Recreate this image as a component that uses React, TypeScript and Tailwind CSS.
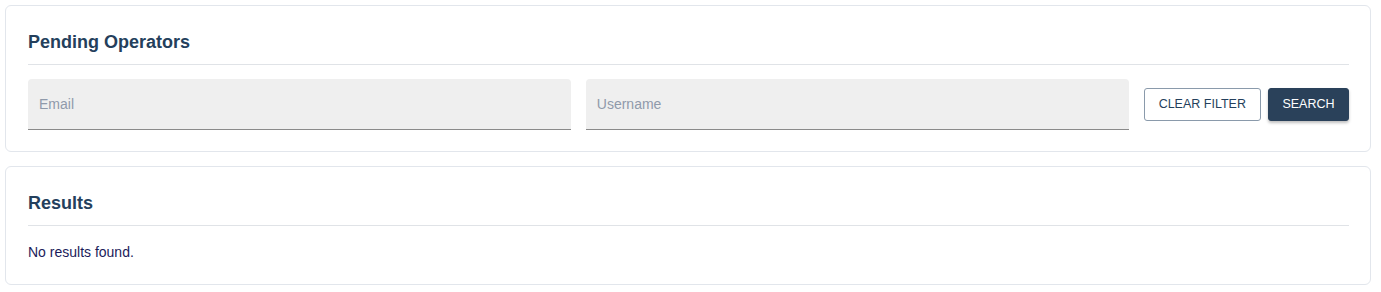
import React, { useState } from "react";

const font = { fontFamily: '"Liberation Sans", Arial, sans-serif' };

function Card({ title, children }: { title: string; children: React.ReactNode }) {
  return (
    <div className="bg-white border border-[#e2e6ec] rounded-[6px] pl-[22px] pr-[21px] pt-[22px] pb-[21px]">
      <h2 className="text-[18px] leading-[28px] font-bold text-[#243f5c] pb-[8px] border-b border-[#e0e3e7]">
        {title}
      </h2>
      {children}
    </div>
  );
}

export default function App() {
  const [email, setEmail] = useState("");
  const [username, setUsername] = useState("");

  return (
    <div style={font} className="bg-white min-h-[292px] pl-[5px] pr-[10px] pt-[5px] flex flex-col gap-[14px]">
      <Card title="Pending Operators">
        <div className="mt-[14px] flex items-center gap-[15px]">
          <input
            className="flex-1 min-w-0 h-[51px] bg-[#efefef] rounded-t-[4px] border-b border-[#8a8a8a] px-[11px] text-[14px] text-[#333] placeholder:text-[#8f9aab] outline-none"
            placeholder="Email"
            value={email}
            onChange={(e) => setEmail(e.target.value)}
          />
          <input
            className="flex-1 min-w-0 h-[51px] bg-[#efefef] rounded-t-[4px] border-b border-[#8a8a8a] px-[11px] text-[14px] text-[#333] placeholder:text-[#8f9aab] outline-none"
            placeholder="Username"
            value={username}
            onChange={(e) => setUsername(e.target.value)}
          />
          <div className="flex items-center gap-[7px]">
            <button
              onClick={() => {
                setEmail("");
                setUsername("");
              }}
              className="h-[33px] px-[14px] border border-[#8a9aab] rounded-[3px] bg-white text-[12.5px] text-[#243f5c]"
            >
              CLEAR FILTER
            </button>
            <button className="h-[33px] px-[13.5px] border border-[#2a415a] rounded-[3px] bg-[#2a415a] text-[12.5px] text-white shadow-[0_2px_3px_rgba(0,0,0,0.25)]">
              SEARCH
            </button>
          </div>
        </div>
      </Card>
      <Card title="Results">
        <p className="mt-[15px] text-[14px] leading-[22px] text-[#1b1b5a]">No results found.</p>
      </Card>
    </div>
  );
}
